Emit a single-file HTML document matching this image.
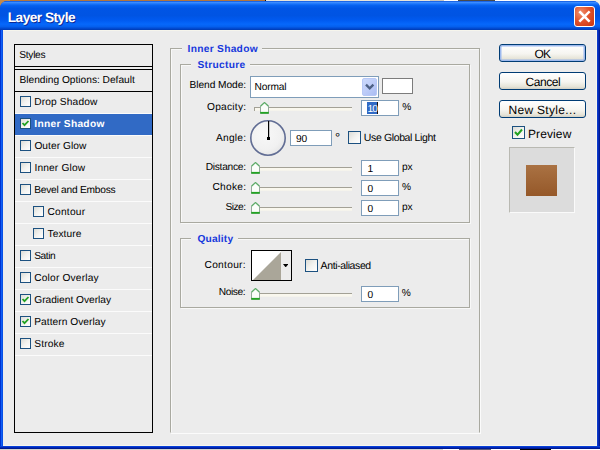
<!DOCTYPE html>
<html><head><meta charset="utf-8"><title>Layer Style</title>
<style>
html,body{margin:0;padding:0;}
body{width:600px;height:450px;position:relative;overflow:hidden;background:#ececec;font-family:"Liberation Sans",sans-serif;text-rendering:geometricPrecision;}
.a{position:absolute;box-sizing:border-box;}
.t{position:absolute;white-space:nowrap;}
.cb{position:absolute;box-sizing:border-box;border:1px solid #1c5180;background:linear-gradient(135deg,#dcdcd6 0%,#f2f2ef 50%,#ffffff 100%);}
.inp{position:absolute;box-sizing:border-box;border:1px solid #7f9db9;background:#fff;}
.btn{position:absolute;box-sizing:border-box;border:1px solid #003c74;border-radius:3px;background:linear-gradient(180deg,#ffffff 0%,#f6f5f0 55%,#e6e4d8 85%,#d2d0c4 100%);}
.sep{position:absolute;left:15px;width:137px;height:1px;background:#fbfbfb;}
.trk{position:absolute;height:4px;border-top:1px solid #a3a196;border-left:1px solid #a3a196;background:linear-gradient(180deg,#f9f7ee 0,#f9f7ee 2px,#f1f0ea 3px);box-sizing:border-box;}
.fs{position:absolute;background:#a9a9a0;}
.fsl{position:absolute;background:#f8f8f8;}

</style></head>
<body>
<!-- desktop strips behind the window -->
<div class="a" style="left:0;top:0;width:600px;height:2px;background:#e8e4d8"></div>
<div class="a" style="left:0;top:0;width:265px;height:2px;background:#b4753c"></div>
<div class="a" style="left:265px;top:0;width:1px;height:1px;background:#111"></div>
<div class="a" style="left:430px;top:0;width:14px;height:1px;background:#c8c5bd"></div>
<div class="a" style="left:444px;top:0;width:156px;height:1px;background:#fdfdfd"></div>
<div class="a" style="left:458px;top:0;width:37px;height:1px;background:#4a4a4a"></div>
<div class="a" style="left:0;top:449px;width:600px;height:1px;background:#d2d2cc"></div>
<div class="a" style="left:443px;top:449px;width:157px;height:1px;background:#fff"></div>
<div class="a" style="left:459px;top:449px;width:32px;height:1px;background:#565a78"></div>
<div class="a" style="left:520px;top:449px;width:31px;height:1px;background:#000"></div>
<div class="a" style="left:0;top:0;width:10px;height:9px;background:#c48a4a"></div>
<div class="a" style="left:590px;top:0;width:10px;height:9px;background:#efede4"></div>
<!-- window frame -->
<div class="a" id="win" style="left:0;top:1px;width:600px;height:448px;border-radius:7px 7px 0 0;background:#0a3cd8;"></div>
<div class="a" style="left:0;top:29px;width:3px;height:420px;background:linear-gradient(90deg,#0032d0 0,#0032d0 1px,#1060f6 1px,#1060f6 2px,#0850e6 2px);"></div>
<div class="a" style="left:597px;top:29px;width:3px;height:420px;background:linear-gradient(90deg,#0c3aca 0,#0c3aca 1px,#062ab6 1px,#062ab6 2px,#001a94 2px);"></div>
<div class="a" style="left:0;top:446px;width:600px;height:3px;background:linear-gradient(180deg,#0840d8 0,#0840d8 1px,#0028b8 1px,#0028b8 2px,#001a90 2px);"></div>
<div class="a" id="title" style="left:0;top:1px;width:600px;height:29px;border-radius:7px 7px 0 0;background:linear-gradient(180deg,#0a52dc 0%,#3b8cff 5%,#1a74fb 10%,#0560ee 16%,#0055e5 26%,#0054e3 50%,#005af0 66%,#0668fb 80%,#0560ee 88%,#0149cf 95%,#003ab0 100%);"></div>
<div class="a" id="client" style="left:3px;top:30px;width:594px;height:416px;background:#ececec;border-right:1px solid #f8f6ee;border-bottom:1px solid #f8f6ee;"></div>
<div class="a" style="left:3px;top:30px;width:594px;height:1px;background:#f6f5ec;"></div>
<!-- close button -->
<div class="a" style="left:574px;top:6px;width:21px;height:21px;border:1px solid #fff;border-radius:3px;background:radial-gradient(circle at 30% 30%,#f0916f 0%,#e2532c 45%,#c63410 100%);"></div>
<svg class="a" style="left:574px;top:6px" width="21" height="21" viewBox="0 0 21 21"><path d="M6.2 6.2 L14.8 14.8 M14.8 6.2 L6.2 14.8" stroke="#fff" stroke-width="2.5" stroke-linecap="square" fill="none"/></svg>

<!-- left panel -->
<div class="a" style="left:14px;top:44px;width:139px;height:389px;border:1px solid #000;"></div>
<div class="a" style="left:14px;top:66px;width:139px;height:1px;background:#000;"></div>
<div class="a" style="left:14px;top:69px;width:139px;height:1px;background:#000;"></div>
<div class="a" style="left:14px;top:91px;width:139px;height:1px;background:#000;"></div>
<div class="sep" style="top:113px"></div>
<div class="sep" style="top:135px"></div>
<div class="a" style="left:15px;top:114px;width:137px;height:21px;background:#316ac5;"></div>
<div class="sep" style="top:157px"></div>
<div class="sep" style="top:179px"></div>
<div class="sep" style="top:201px"></div>
<div class="sep" style="top:223px"></div>
<div class="sep" style="top:245px"></div>
<div class="sep" style="top:267px"></div>
<div class="sep" style="top:289px"></div>
<div class="sep" style="top:311px"></div>
<div class="sep" style="top:333px"></div>
<div class="sep" style="top:355px"></div>
<!-- list checkboxes -->
<div class="cb" style="left:20px;top:96px;width:11px;height:11px"></div>
<div class="cb" style="left:20px;top:118px;width:11px;height:11px"></div>
<div class="cb" style="left:20px;top:140px;width:11px;height:11px"></div>
<div class="cb" style="left:20px;top:162px;width:11px;height:11px"></div>
<div class="cb" style="left:20px;top:184px;width:11px;height:11px"></div>
<div class="cb" style="left:33px;top:206px;width:11px;height:11px"></div>
<div class="cb" style="left:33px;top:228px;width:11px;height:11px"></div>
<div class="cb" style="left:20px;top:250px;width:11px;height:11px"></div>
<div class="cb" style="left:20px;top:272px;width:11px;height:11px"></div>
<div class="cb" style="left:20px;top:294px;width:11px;height:11px"></div>
<div class="cb" style="left:20px;top:316px;width:11px;height:11px"></div>
<div class="cb" style="left:20px;top:338px;width:11px;height:11px"></div>
<svg class="a" style="left:20px;top:118px" width="11" height="11" viewBox="0 0 11 11"><path d="M2.5 5 L4.5 7.2 L8.5 3" stroke="#21a121" stroke-width="1.8" fill="none"/></svg>
<svg class="a" style="left:20px;top:294px" width="11" height="11" viewBox="0 0 11 11"><path d="M2.5 5 L4.5 7.2 L8.5 3" stroke="#21a121" stroke-width="1.8" fill="none"/></svg>
<svg class="a" style="left:20px;top:316px" width="11" height="11" viewBox="0 0 11 11"><path d="M2.5 5 L4.5 7.2 L8.5 3" stroke="#21a121" stroke-width="1.8" fill="none"/></svg>

<!-- fieldsets: outer (170..480, 48..432) -->
<div class="a" style="left:170px;top:48px;width:310px;height:385px;border:1px solid #a9a9a0;border-bottom-color:#ececec;box-shadow:inset 1px 1px 0 #f8f8f8, 1px 1px 0 #fbfbfb;"></div>
<div class="a" style="left:182px;top:46px;width:80px;height:6px;background:#ececec;"></div>
<!-- structure (180..470, 64..222) -->
<div class="a" style="left:180px;top:64px;width:290px;height:159px;border:1px solid #a9a9a0;box-shadow:inset 1px 1px 0 #f8f8f8, 1px 1px 0 #f8f8f8;"></div>
<div class="a" style="left:191px;top:62px;width:59px;height:6px;background:#ececec;"></div>
<!-- quality (180..470, 238..307) -->
<div class="a" style="left:180px;top:238px;width:290px;height:70px;border:1px solid #a9a9a0;box-shadow:inset 1px 1px 0 #f8f8f8, 1px 1px 0 #f8f8f8;"></div>
<div class="a" style="left:191px;top:236px;width:47px;height:6px;background:#ececec;"></div>

<!-- blend mode select -->
<div class="inp" style="left:250px;top:76px;width:129px;height:22px;"></div>
<div class="a" style="left:362px;top:78px;width:15px;height:18px;border-radius:2px;border:1px solid #b7c8f6;background:linear-gradient(135deg,#cbd9fc 0%,#bccbf8 55%,#a9bcf2 100%);"></div>
<svg class="a" style="left:362px;top:78px" width="15" height="18" viewBox="0 0 15 18"><path d="M4 6.6 L7.7 10.3 L11.4 6.6" stroke="#4d6185" stroke-width="2.3" fill="none"/></svg>
<!-- color swatch -->
<div class="a" style="left:382px;top:78px;width:31px;height:16px;border:1px solid #7c7c7c;background:#fff;"></div>
<!-- opacity slider -->
<div class="trk" style="left:254px;top:107px;width:98px;"></div>
<!-- opacity input -->
<div class="inp" style="left:361px;top:100px;width:38px;height:16px;"></div>
<div class="a" style="left:367px;top:102px;width:11px;height:12px;background:#316ac5;border-right:1px solid #111;"></div>
<!-- angle dial -->
<svg class="a" style="left:249px;top:119px" width="38" height="38" viewBox="0 0 38 38"><defs><radialGradient id="dg" cx="42%" cy="38%" r="65%"><stop offset="0" stop-color="#f8f8f8"/><stop offset="0.7" stop-color="#f1f1f1"/><stop offset="1" stop-color="#e6e6e6"/></radialGradient></defs><circle cx="19" cy="19" r="17.2" fill="url(#dg)" stroke="#616d94" stroke-width="1.6"/><rect x="19" y="2" width="1.2" height="17" fill="#000"/><rect x="18" y="18" width="3" height="3" fill="#000"/></svg>
<!-- angle input -->
<div class="inp" style="left:290px;top:130px;width:42px;height:16px;"></div>
<!-- use global light cb -->
<div class="cb" style="left:348px;top:131px;width:13px;height:13px"></div>
<!-- sliders -->
<div class="trk" style="left:254px;top:167px;width:98px;"></div>
<div class="trk" style="left:254px;top:187px;width:98px;"></div>
<div class="trk" style="left:254px;top:207px;width:98px;"></div>
<div class="inp" style="left:361px;top:160px;width:38px;height:16px;"></div>
<div class="inp" style="left:361px;top:180px;width:38px;height:16px;"></div>
<div class="inp" style="left:361px;top:200px;width:38px;height:16px;"></div>
<!-- contour -->
<div class="a" style="left:251px;top:250px;width:41px;height:31px;border:1px solid #000;background:#ececec;"></div>
<svg class="a" style="left:252px;top:251px" width="29" height="29" viewBox="0 0 29 29"><rect width="29" height="29" fill="#fff"/><path d="M1 29 L29 1 L29 29 Z" fill="#aaa699"/></svg>
<svg class="a" style="left:283px;top:264px" width="5.4" height="3.4" viewBox="0 0 5.4 3.4"><path d="M0 0 L5.4 0 L2.7 3.4 Z" fill="#000"/></svg>
<div class="cb" style="left:305px;top:259px;width:13px;height:13px"></div>
<div class="trk" style="left:254px;top:293px;width:98px;"></div>
<div class="inp" style="left:361px;top:286px;width:38px;height:16px;"></div>

<!-- slider thumbs -->
<svg class="a thumb" style="left:260px;top:102px" width="9" height="13" viewBox="0 0 9 13"><path d="M0.5 4.2 L4.5 0.5 L8.5 4.2 L8.5 11.4 L0.5 11.4 Z" fill="#fbfdfa" stroke="#93a89a" stroke-width="1"/><path d="M0.5 4.2 L4.5 0.5 L8.5 4.2" fill="none" stroke="#5fae6a" stroke-width="1.2"/><path d="M0.2 10.8 L8.8 10.8" stroke="#22a422" stroke-width="1.8"/></svg>
<svg class="a thumb" style="left:250.7px;top:162px" width="9" height="13" viewBox="0 0 9 13"><path d="M0.5 4.2 L4.5 0.5 L8.5 4.2 L8.5 11.4 L0.5 11.4 Z" fill="#fbfdfa" stroke="#93a89a" stroke-width="1"/><path d="M0.5 4.2 L4.5 0.5 L8.5 4.2" fill="none" stroke="#5fae6a" stroke-width="1.2"/><path d="M0.2 10.8 L8.8 10.8" stroke="#22a422" stroke-width="1.8"/></svg>
<svg class="a thumb" style="left:250.7px;top:182px" width="9" height="13" viewBox="0 0 9 13"><path d="M0.5 4.2 L4.5 0.5 L8.5 4.2 L8.5 11.4 L0.5 11.4 Z" fill="#fbfdfa" stroke="#93a89a" stroke-width="1"/><path d="M0.5 4.2 L4.5 0.5 L8.5 4.2" fill="none" stroke="#5fae6a" stroke-width="1.2"/><path d="M0.2 10.8 L8.8 10.8" stroke="#22a422" stroke-width="1.8"/></svg>
<svg class="a thumb" style="left:250.7px;top:202px" width="9" height="13" viewBox="0 0 9 13"><path d="M0.5 4.2 L4.5 0.5 L8.5 4.2 L8.5 11.4 L0.5 11.4 Z" fill="#fbfdfa" stroke="#93a89a" stroke-width="1"/><path d="M0.5 4.2 L4.5 0.5 L8.5 4.2" fill="none" stroke="#5fae6a" stroke-width="1.2"/><path d="M0.2 10.8 L8.8 10.8" stroke="#22a422" stroke-width="1.8"/></svg>
<svg class="a thumb" style="left:250.7px;top:288px" width="9" height="13" viewBox="0 0 9 13"><path d="M0.5 4.2 L4.5 0.5 L8.5 4.2 L8.5 11.4 L0.5 11.4 Z" fill="#fbfdfa" stroke="#93a89a" stroke-width="1"/><path d="M0.5 4.2 L4.5 0.5 L8.5 4.2" fill="none" stroke="#5fae6a" stroke-width="1.2"/><path d="M0.2 10.8 L8.8 10.8" stroke="#22a422" stroke-width="1.8"/></svg>

<!-- buttons -->
<div class="btn" style="left:499px;top:44px;width:87px;height:18px;box-shadow:inset 0 0 0 1.5px #9db9ee;"></div>
<div class="btn" style="left:499px;top:72px;width:87px;height:18px;"></div>
<div class="btn" style="left:499px;top:100px;width:87px;height:18px;"></div>
<!-- preview cb -->
<div class="cb" style="left:512px;top:126px;width:13px;height:13px"></div>
<svg class="a" style="left:512px;top:126px" width="13" height="13" viewBox="0 0 13 13"><path d="M3 6 L5.5 8.7 L10 3.5" stroke="#21a121" stroke-width="2" fill="none"/></svg>
<!-- preview swatch -->
<div class="a" style="left:509px;top:147px;width:66px;height:66px;background:#dcdcdc;border-top:1px solid #b9b9b2;border-left:1px solid #b9b9b2;border-right:1px solid #fafafa;border-bottom:1px solid #fafafa;"></div>
<div class="a" style="left:526px;top:165px;width:31px;height:31px;background:linear-gradient(180deg,#aa7243 0%,#955829 100%);"></div>

<span class="t" style="left:7.70px;top:10.00px;font-size:13.7px;line-height:15.7px;letter-spacing:-0.515px;color:#fff;font-weight:700;text-shadow:1px 1px 0 #0a2a96;">Layer Style</span>
<span class="t" style="left:19.30px;top:50.00px;font-size:10.2px;line-height:12.2px;letter-spacing:-0.290px;color:#000;">Styles</span>
<span class="t" style="left:19.50px;top:75.00px;font-size:10.2px;line-height:12.2px;letter-spacing:-0.008px;color:#000;">Blending Options: Default</span>
<span class="t" style="left:34.25px;top:97.00px;font-size:10.2px;line-height:12.2px;letter-spacing:0.137px;color:#000;">Drop Shadow</span>
<span class="t" style="left:34.25px;top:119.00px;font-size:10.2px;line-height:12.2px;letter-spacing:0.300px;color:#fff;font-weight:700;">Inner Shadow</span>
<span class="t" style="left:34.40px;top:141.00px;font-size:10.2px;line-height:12.2px;letter-spacing:0.041px;color:#000;">Outer Glow</span>
<span class="t" style="left:34.40px;top:163.00px;font-size:10.2px;line-height:12.2px;letter-spacing:0.159px;color:#000;">Inner Glow</span>
<span class="t" style="left:34.25px;top:185.00px;font-size:10.2px;line-height:12.2px;letter-spacing:-0.240px;color:#000;">Bevel and Emboss</span>
<span class="t" style="left:47.50px;top:207.00px;font-size:10.2px;line-height:12.2px;letter-spacing:0.225px;color:#000;">Contour</span>
<span class="t" style="left:47.50px;top:229.00px;font-size:10.2px;line-height:12.2px;letter-spacing:0.071px;color:#000;">Texture</span>
<span class="t" style="left:34.25px;top:251.00px;font-size:10.2px;line-height:12.2px;letter-spacing:-0.471px;color:#000;">Satin</span>
<span class="t" style="left:34.25px;top:273.00px;font-size:10.2px;line-height:12.2px;letter-spacing:0.172px;color:#000;">Color Overlay</span>
<span class="t" style="left:34.25px;top:295.00px;font-size:10.2px;line-height:12.2px;letter-spacing:-0.011px;color:#000;">Gradient Overlay</span>
<span class="t" style="left:34.25px;top:317.00px;font-size:10.2px;line-height:12.2px;letter-spacing:0.041px;color:#000;">Pattern Overlay</span>
<span class="t" style="left:34.25px;top:339.00px;font-size:10.2px;line-height:12.2px;letter-spacing:0.129px;color:#000;">Stroke</span>
<span class="t" style="left:187.50px;top:44.00px;font-size:10.2px;line-height:12.2px;letter-spacing:0.300px;color:#1638dc;font-weight:700;">Inner Shadow</span>
<span class="t" style="left:197.50px;top:60.00px;font-size:10.2px;line-height:12.2px;letter-spacing:0.288px;color:#1638dc;font-weight:700;">Structure</span>
<span class="t" style="left:197.50px;top:234.00px;font-size:10.2px;line-height:12.2px;letter-spacing:0.176px;color:#1638dc;font-weight:700;">Quality</span>
<span class="t" style="left:189.50px;top:80.00px;font-size:10.2px;line-height:12.2px;letter-spacing:-0.060px;color:#000;">Blend Mode:</span>
<span class="t" style="left:207.00px;top:102.00px;font-size:10.2px;line-height:12.2px;letter-spacing:0.246px;color:#000;">Opacity:</span>
<span class="t" style="left:216.00px;top:133.00px;font-size:10.2px;line-height:12.2px;letter-spacing:0.242px;color:#000;">Angle:</span>
<span class="t" style="left:205.70px;top:161.50px;font-size:10.2px;line-height:12.2px;letter-spacing:-0.259px;color:#000;">Distance:</span>
<span class="t" style="left:212.50px;top:181.50px;font-size:10.2px;line-height:12.2px;letter-spacing:0.264px;color:#000;">Choke:</span>
<span class="t" style="left:225.50px;top:202.00px;font-size:10.2px;line-height:12.2px;letter-spacing:-0.514px;color:#000;">Size:</span>
<span class="t" style="left:204.50px;top:260.00px;font-size:10.2px;line-height:12.2px;letter-spacing:0.289px;color:#000;">Contour:</span>
<span class="t" style="left:218.70px;top:286.50px;font-size:10.2px;line-height:12.2px;letter-spacing:-0.398px;color:#000;">Noise:</span>
<span class="t" style="left:254.50px;top:82.00px;font-size:10.2px;line-height:12.2px;letter-spacing:-0.149px;color:#000;">Normal</span>
<span class="t" style="left:367.60px;top:104.00px;font-size:10.2px;line-height:12.2px;letter-spacing:-0.900px;color:#fff;">10</span>
<span class="t" style="left:402.30px;top:102.00px;font-size:10.2px;line-height:12.2px;letter-spacing:0.000px;color:#000;">%</span>
<span class="t" style="left:296.00px;top:134.00px;font-size:10.2px;line-height:12.2px;letter-spacing:-0.244px;color:#000;">90</span>
<span class="t" style="left:335.00px;top:129.50px;font-size:13px;line-height:15px;letter-spacing:0.000px;color:#000;">°</span>
<span class="t" style="left:363.80px;top:132.00px;font-size:10.5px;line-height:12.5px;letter-spacing:-0.369px;color:#000;">Use Global Light</span>
<span class="t" style="left:367.50px;top:164.00px;font-size:10.2px;line-height:12.2px;letter-spacing:0.000px;color:#000;">1</span>
<span class="t" style="left:367.50px;top:184.00px;font-size:10.2px;line-height:12.2px;letter-spacing:0.000px;color:#000;">0</span>
<span class="t" style="left:367.50px;top:204.00px;font-size:10.2px;line-height:12.2px;letter-spacing:0.000px;color:#000;">0</span>
<span class="t" style="left:402.00px;top:162.00px;font-size:10.2px;line-height:12.2px;letter-spacing:-0.166px;color:#000;">px</span>
<span class="t" style="left:402.00px;top:182.00px;font-size:10.2px;line-height:12.2px;letter-spacing:0.000px;color:#000;">%</span>
<span class="t" style="left:402.00px;top:202.00px;font-size:10.2px;line-height:12.2px;letter-spacing:-0.166px;color:#000;">px</span>
<span class="t" style="left:320.60px;top:259.60px;font-size:10.5px;line-height:12.5px;letter-spacing:-0.389px;color:#000;">Anti-aliased</span>
<span class="t" style="left:367.50px;top:290.00px;font-size:10.2px;line-height:12.2px;letter-spacing:0.000px;color:#000;">0</span>
<span class="t" style="left:401.70px;top:288.00px;font-size:10.2px;line-height:12.2px;letter-spacing:0.000px;color:#000;">%</span>
<span class="t" style="left:534.50px;top:46.50px;font-size:12px;line-height:14px;letter-spacing:-0.900px;color:#000;">OK</span>
<span class="t" style="left:525.60px;top:74.50px;font-size:12px;line-height:14px;letter-spacing:-0.472px;color:#000;">Cancel</span>
<span class="t" style="left:508.40px;top:102.50px;font-size:12px;line-height:14px;letter-spacing:0.324px;color:#000;">New Style...</span>
<span class="t" style="left:528.00px;top:126.50px;font-size:12px;line-height:14px;letter-spacing:0.102px;color:#000;">Preview</span>
</body></html>
